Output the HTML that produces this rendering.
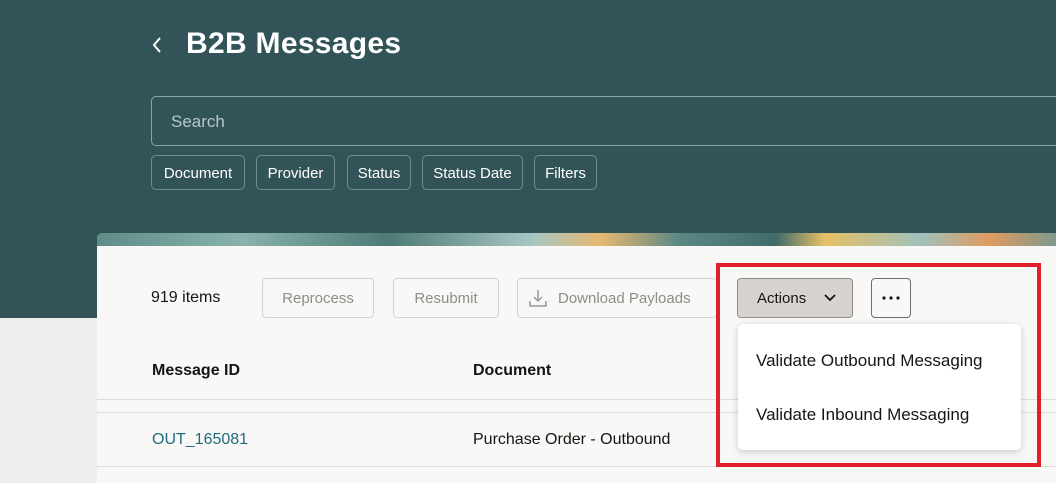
<!DOCTYPE html>
<html><head><style>
*{box-sizing:border-box;margin:0;padding:0}
body{width:1056px;height:475px;overflow:hidden;background:#eeedeb;font-family:"Liberation Sans",sans-serif;position:relative}
.hdr{position:absolute;left:0;top:0;width:1056px;height:318px;background:#325458}
.abs{position:absolute}
.chip{position:absolute;top:155px;height:35px;border:1px solid #6f8c8f;border-radius:5px;color:#fff;font-size:15px;line-height:35px;text-align:center}
.card{position:absolute;left:97px;top:233px;width:970px;height:250px;background:#f9f8f6;border-radius:6px 0 0 0;overflow:hidden}
.banner{position:absolute;left:0;top:0;width:100%;height:13px;background:linear-gradient(90deg,#5e8d88 0%,#89b2ae 15%,#4d7a76 30%,#a9c7c2 45%,#e6b870 52%,#5b8884 60%,#3f6c6a 70%,#e6c064 75%,#9fc1bb 85%,#e29a5f 92%,#6c9a95 100%)}
.btn{position:absolute;top:278px;height:40px;border:1px solid #d3d1cd;border-radius:4px;color:#8f8d8a;font-size:15px;line-height:40px;text-align:center;background:#f9f8f6}
</style></head><body>
<div class="hdr"></div>
<svg class="abs" style="left:150px;top:36px" width="14" height="18" viewBox="0 0 14 18" fill="none" stroke="#fff" stroke-width="2"><path d="M10 2L4 9l6 7"/></svg>
<div class="abs" style="left:186px;top:27px;color:#fff;font-size:30px;font-weight:bold;letter-spacing:0.3px">B2B Messages</div>
<div class="abs" style="left:151px;top:96px;width:920px;height:50px;border:1px solid #8aa3a5;border-radius:5px;color:#b8c7c8;font-size:17px;line-height:50px;padding-left:19px">Search</div>
<div class="chip" style="left:151px;width:94px">Document</div>
<div class="chip" style="left:256px;width:79px">Provider</div>
<div class="chip" style="left:347px;width:64px">Status</div>
<div class="chip" style="left:422px;width:101px">Status Date</div>
<div class="chip" style="left:534px;width:63px">Filters</div>
<div class="card"><div class="banner"></div></div>
<div class="abs" style="left:151px;top:289px;font-size:16px;color:#161513">919 items</div>
<div class="btn" style="left:262px;width:112px">Reprocess</div>
<div class="btn" style="left:393px;width:106px">Resubmit</div>
<div class="btn" style="left:517px;width:200px;text-align:left;padding-left:40px">Download Payloads</div>
<svg class="abs" style="left:528px;top:288px" width="20" height="20" viewBox="0 0 20 20" fill="none" stroke="#9a9895" stroke-width="1.5"><path d="M10 2v11M6 9l4 4 4-4M2 13v5h16v-5"/></svg>
<div class="btn" style="left:737px;width:116px;background:#d6d3d0;border-color:#8f8d8a;color:#161513;text-align:left;padding-left:19px">Actions</div>
<svg class="abs" style="left:823px;top:293px" width="14" height="10" viewBox="0 0 14 10" fill="none" stroke="#161513" stroke-width="1.8"><path d="M2 2l5 5 5-5"/></svg>
<div class="btn" style="left:871px;width:40px;border-color:#6f6d6a"></div>
<svg class="abs" style="left:881px;top:296px" width="20" height="4" viewBox="0 0 20 4" fill="#161513"><circle cx="3" cy="2" r="1.6"/><circle cx="10" cy="2" r="1.6"/><circle cx="17" cy="2" r="1.6"/></svg>
<div class="abs" style="left:152px;top:362px;font-size:16px;color:#161513;font-weight:bold">Message ID</div>
<div class="abs" style="left:473px;top:362px;font-size:16px;color:#161513;font-weight:bold">Document</div>
<div class="abs" style="left:97px;top:399px;width:970px;height:1px;background:#dedcd8"></div>
<div class="abs" style="left:97px;top:412px;width:970px;height:1px;background:#dedcd8"></div>
<div class="abs" style="left:97px;top:466px;width:970px;height:1px;background:#dedcd8"></div>
<div class="abs" style="left:152px;top:431px;font-size:16px;color:#1f6b82">OUT_165081</div>
<div class="abs" style="left:473px;top:431px;font-size:16px;color:#161513">Purchase Order - Outbound</div>
<div class="abs" style="left:738px;top:324px;width:283px;height:126px;background:#fff;border-radius:5px;box-shadow:0 2px 8px rgba(0,0,0,.18)"></div>
<div class="abs" style="left:756px;top:351px;font-size:17px;color:#161513">Validate Outbound Messaging</div>
<div class="abs" style="left:756px;top:405px;font-size:17px;color:#161513">Validate Inbound Messaging</div>
<div class="abs" style="left:716px;top:263px;width:325px;height:204px;border:4px solid #e0202a"></div>
</body></html>
